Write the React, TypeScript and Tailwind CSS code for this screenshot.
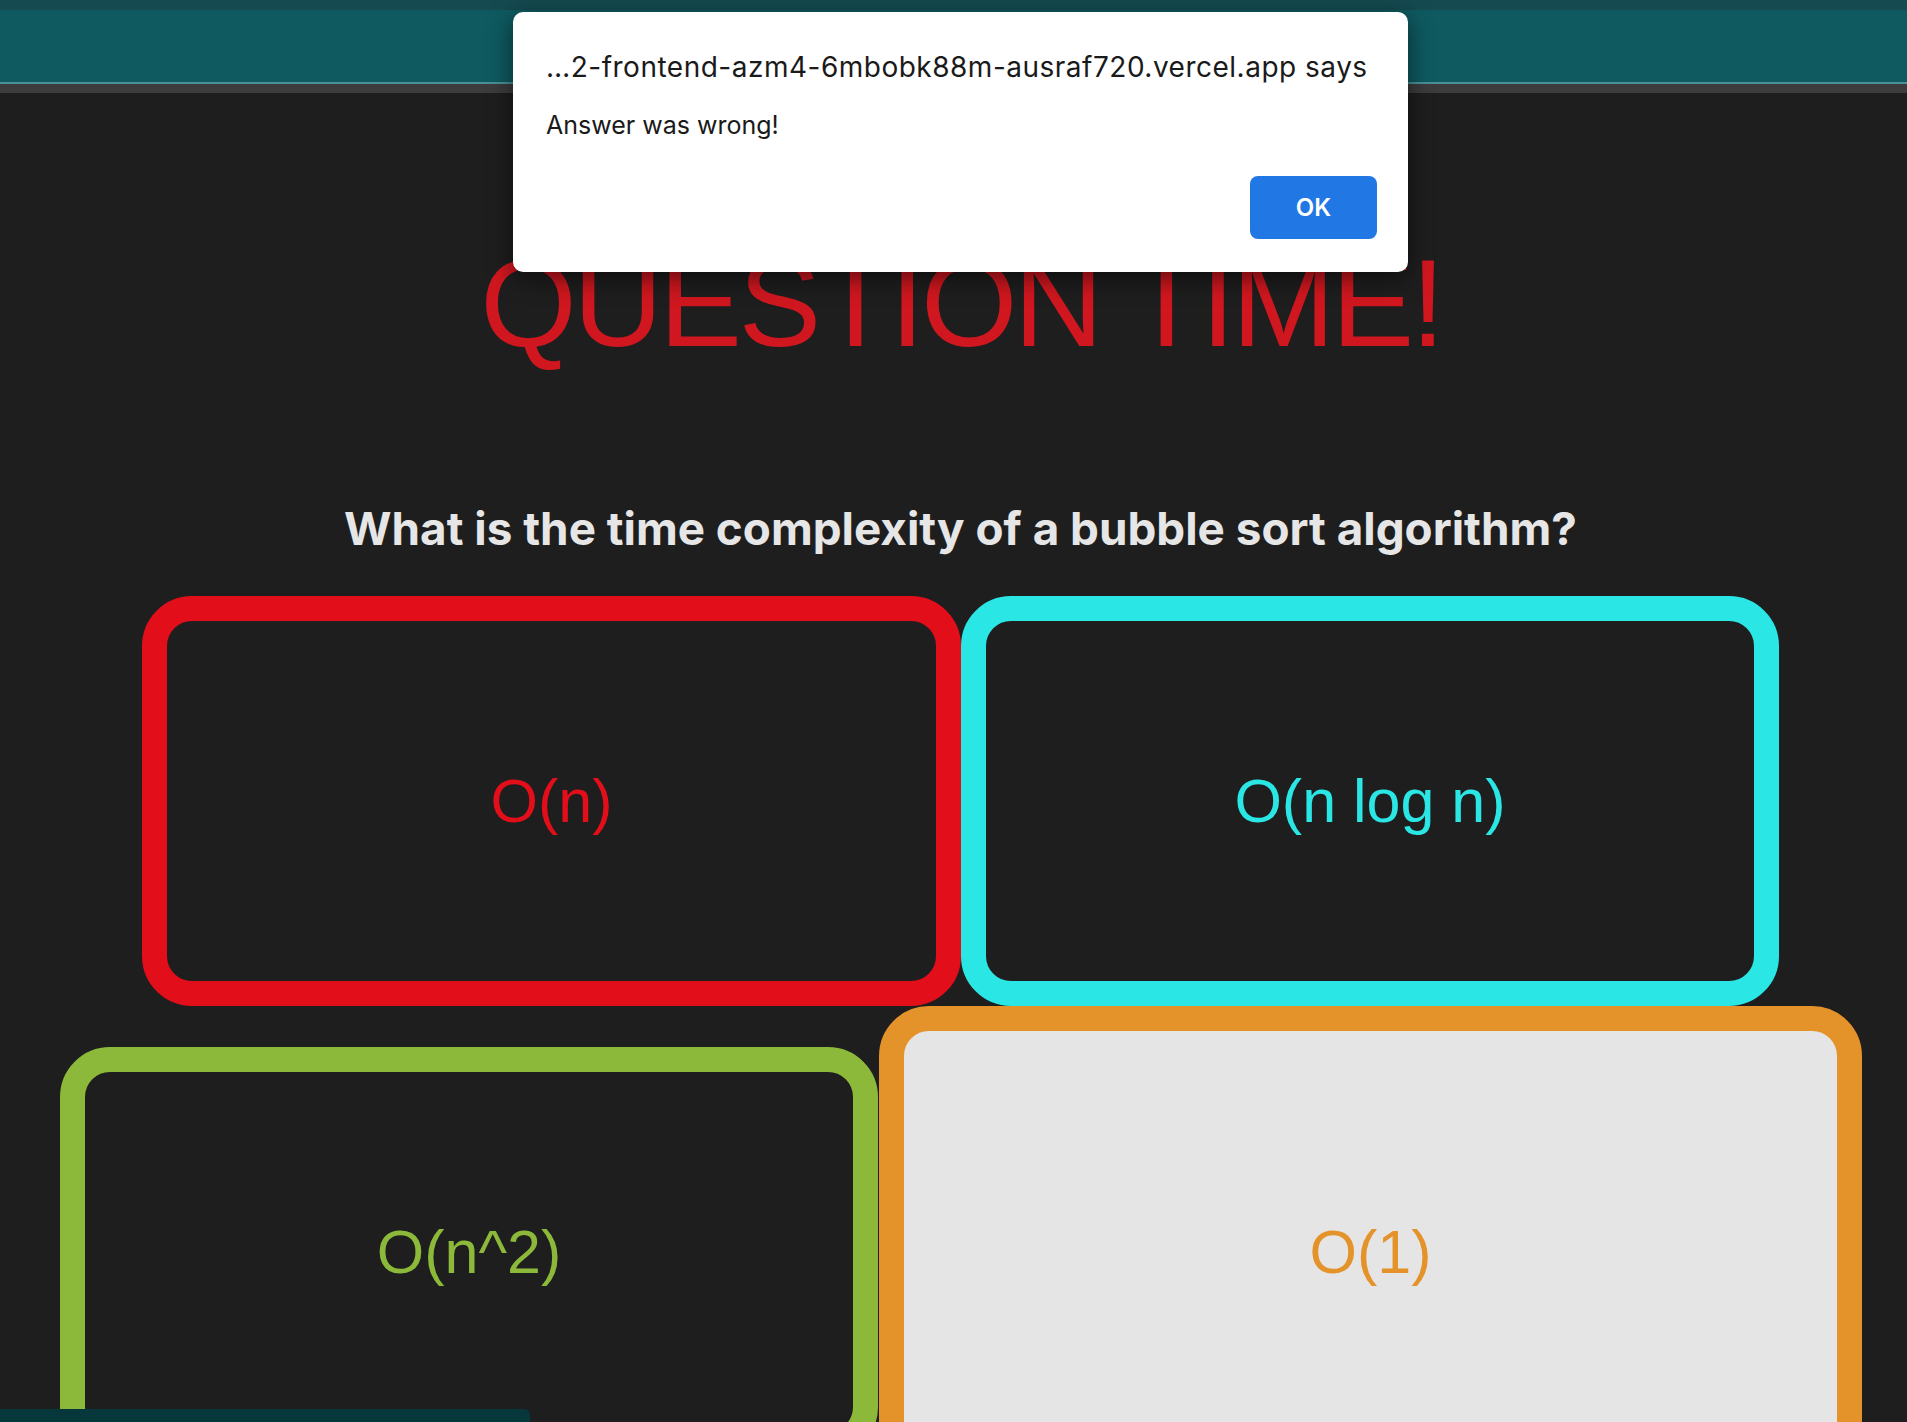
import React from "react";

const cardBase =
  "box-border flex items-center justify-center rounded-[50px] border-[25px] border-solid shrink-0";

export default function App() {
  return (
    <div
      className="relative w-[1907px] h-[1422px] overflow-hidden bg-[#1e1e1e]"
      style={{ fontFamily: "'Liberation Sans', Arial, sans-serif" }}
    >
      {/* top browser/app bar */}
      <div className="h-[10px] bg-[#144a50]" />
      <div className="h-[72px] bg-[#0e5a60]" />
      <div className="h-[2px] bg-[#4b9096]" />
      <div className="h-[9px] bg-[#3c3c3c]" />

      {/* heading */}
      <h1 className="mt-[148px] pl-[15px] text-center text-[124px] leading-none font-normal text-[#d0171f] tracking-[-3.5px]">
        QUESTION TIME!
      </h1>

      {/* question */}
      <p className="mt-[141px] pl-[14px] text-center text-[45.8px] leading-[46px] font-bold text-[#e6e6e6] font-['Inter',sans-serif]">
        What is the time complexity of a bubble sort algorithm?
      </p>

      {/* answers */}
      <div className="mt-[44px] flex flex-col">
        <div className="flex pl-[142px]">
          <div className={`${cardBase} w-[819px] h-[410px] border-[#e20e1a] bg-[#1e1e1e]`}>
            <span className="text-[61px] leading-none text-[#e20e1a]">O(n)</span>
          </div>
          <div className={`${cardBase} w-[818px] h-[410px] border-[#2ae6e4] bg-[#1e1e1e]`}>
            <span className="text-[61px] leading-none text-[#2ae6e4]">O(n log n)</span>
          </div>
        </div>
        <div className="mt-[41px] flex items-start pl-[60px]">
          <div className={`${cardBase} w-[818px] h-[410px] border-[#8db93b] bg-[#1e1e1e]`}>
            <span className="text-[61px] leading-none text-[#8db93b]">O(n^2)</span>
          </div>
          <div className={`${cardBase} ml-[1px] -mt-[41px] w-[983px] h-[492px] border-[#e4932a] bg-[#e5e5e5]`}>
            <span className="text-[61px] leading-none text-[#e4932a]">O(1)</span>
          </div>
        </div>
      </div>

      {/* bottom-left overlay bar */}
      <div className="absolute left-0 top-[1409px] w-[530px] h-[20px] rounded-tr-[6px] bg-[#06373b]" />

      {/* alert dialog */}
      <div className="absolute left-[513px] top-[12px] w-[895px] h-[260px] box-border rounded-[10px] bg-white shadow-[0_6px_24px_rgba(0,0,0,0.55)] pl-[33px] pr-[31px] font-['Inter',sans-serif] flex flex-col">
        <div className="mt-[41px] text-[28px] leading-none tracking-[0.5px] text-[#1a1a1a] whitespace-nowrap">
          …2-frontend-azm4-6mbobk88m-ausraf720.vercel.app says
        </div>
        <div className="mt-[32px] text-[25px] leading-none text-[#1a1a1a]">Answer was wrong!</div>
        <div className="mt-[38px] flex justify-end">
          <button className="w-[127px] h-[63px] rounded-[8px] bg-[#2177e4] text-white text-[24px] font-semibold leading-none">
            OK
          </button>
        </div>
      </div>
    </div>
  );
}
